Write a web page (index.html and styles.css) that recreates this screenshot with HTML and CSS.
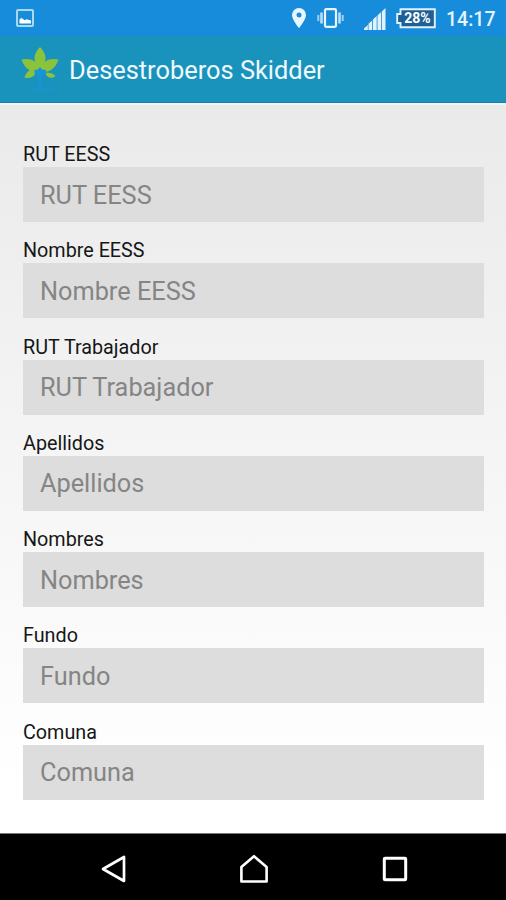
FILE: index.html
```html
<!DOCTYPE html>
<html lang="es">
<head>
<meta charset="utf-8">
<title>Desestroberos Skidder</title>
<link rel="stylesheet" href="styles.css">
</head>
<body>
<div class="screen">
  <div class="status">
    <svg class="picture" width="18" height="18" viewBox="0 0 18 18"><rect x="1" y="1" width="16" height="16" rx="1" fill="none" stroke="#a9d8f7" stroke-width="2"/><path d="M3.500 14.500V10.500l2-1.700 3 2.400 2-1 4.500 1.300v3z" fill="#fff"/></svg>
    <svg class="pin" width="14" height="20" viewBox="0 0 14 20"><path fill="#e9f6ff" fill-rule="evenodd" d="M7 0a7 7 0 0 0-7 7c0 4.700 7 13 7 13s7-8.300 7-13a7 7 0 0 0-7-7zm0 4.500a2.500 2.500 0 1 1 0 5 2.500 2.500 0 0 1 0-5z"/></svg>
    <svg class="vibrate" width="27" height="20" viewBox="0 0 27 20"><rect x="8" y="1.200" width="11" height="17.600" rx="1.200" fill="none" stroke="#e9f6ff" stroke-width="2.200"/><path d="M4.500 4.500v11M22.500 4.500v11" stroke="#b9def8" stroke-width="2.600"/><path d="M1.300 7v6M25.700 7v6" stroke="#9fd0f4" stroke-width="2"/></svg>
    <svg class="signal" width="22" height="22" viewBox="0 0 22 22"><path d="M0 22v-1.500L3.800 17v5zM4.500 22v-6.200L8.200 12.400V22zM9 22V11.600l3.700-3.500V22zM13.500 22V7.400l3.700-3.500V22zM18 22V3.200L21.500 0v22z" fill="#e2f2fd"/></svg>
    <div class="battery">
      <svg width="40" height="21" viewBox="0 0 40 21"><path d="M4.500 1.200H38.800V19.300H4.500V15H1.200V6H4.500z" fill="#1d5f96" stroke="#e2f2fd" stroke-width="1.900"/></svg>
      <span class="percent">28%</span>
    </div>
    <span class="clock">14:17</span>
  </div>
  <header class="bar">
    <svg class="logo" width="38" height="45" viewBox="0 0 38 45">
      <g fill="#8cc33c"><path d="M19 0c3 3 5.500 7 5.500 11.500 0 4-1.500 8-3.500 11.500h-4c-2-3.500-3.500-7.500-3.500-11.500C13.500 7 16 3 19 0z"/><path d="M.5 12.500c6-1.200 11-.5 14 3 2 2.500 2.800 5.500 3 8.500l-4 1C7 24 2.500 19 .5 12.500z"/><path d="M37.500 12.500c-6-1.200-11-.5-14 3-2 2.500-2.800 5.500-3 8.500l4 1c6.500-1 11-6 13-12.500z"/><path d="M16 22.500c-7-1-11 2.500-12.500 8.500 6 .5 11-1 12.500-8.500z"/><path d="M24 26c4-1 8 0 10.500 3-3 3-8 2.500-10.500-3z"/></g>
      <path d="M19 20l2 2.500 4 .5v4l-4.500 3v11.500H34v1.500H11v-1.500h6.300V31l-3.800-4v-4l3.500-.5z" fill="#1793d8"/>
    </svg>
    <h1>Desestroberos Skidder</h1>
  </header>
  <form class="form">
    <label class="field"><span>RUT EESS</span><input type="text" placeholder="RUT EESS"></label>
    <label class="field"><span>Nombre EESS</span><input type="text" placeholder="Nombre EESS"></label>
    <label class="field"><span>RUT Trabajador</span><input type="text" placeholder="RUT Trabajador"></label>
    <label class="field"><span>Apellidos</span><input type="text" placeholder="Apellidos"></label>
    <label class="field"><span>Nombres</span><input type="text" placeholder="Nombres"></label>
    <label class="field"><span>Fundo</span><input type="text" placeholder="Fundo"></label>
    <label class="field"><span>Comuna</span><input type="text" placeholder="Comuna"></label>
  </form>
  <nav class="nav">
    <svg width="28" height="30" viewBox="0 0 28 30"><path d="M24 3v24L3 15z" fill="none" stroke="#fff" stroke-width="2.700" stroke-linejoin="round"/></svg>
    <svg class="home" width="30" height="30" viewBox="0 0 30 30"><path d="M2.400 27.500V13L15 2.200 27.600 13v14.500z" fill="none" stroke="#fff" stroke-width="2.600" stroke-linejoin="round"/></svg>
    <svg width="26" height="26" viewBox="0 0 26 26"><rect x="2.300" y="2.300" width="21.400" height="21.400" rx=".8" fill="none" stroke="#fff" stroke-width="3"/></svg>
  </nav>
</div>
</body>
</html>
```

FILE: styles.css
```css
* { box-sizing: border-box; }
body { margin: 0; font-family: Roboto, sans-serif; }
.screen { width: 506px; height: 900px; display: flex; flex-direction: column; overflow: hidden; }
.screen svg { display: block; flex: none; }

.status { height: 36px; flex: none; display: flex; align-items: flex-start; padding-left: 16px; background: #168cdb; }
.picture { margin-top: 9px; }
.pin { margin: 8px 0 0 258px; }
.vibrate { margin: 8px 0 0 11px; }
.signal { margin: 8px 0 0 20px; }
.battery { position: relative; margin: 8px 0 0 10px; }
.percent { position: absolute; left: 5px; right: 2px; top: 0; line-height: 20px; text-align: center; font-size: 14px; font-weight: 700; color: #fff; }
.clock { margin: 8px 0 0 10px; font-size: 19.500px; line-height: 24px; font-weight: 500; color: #e6f4fe; white-space: nowrap; }

.bar { height: 67px; flex: none; display: flex; align-items: flex-start; padding: 11px 0 0 21px; background: #1a93bc; border-bottom: 1px solid #1583ab; }
.bar h1 { margin: 7px 0 0 10px; font-size: 25.400px; line-height: 33px; font-weight: 400; color: #eef9fd; white-space: nowrap; }

.form { flex: 1; min-height: 0; display: flex; flex-direction: column; gap: 15.300px; padding: 38px 22px 0 23px; border-top: 2px solid #f2f5f6; background: linear-gradient(#eaeaea, #fff 93%); }
.field { display: block; flex: none; height: 81px; }
.field span { display: block; height: 24px; line-height: 24px; font-size: 19.750px; color: #161616; }
.field input { display: block; width: 100%; height: 55px; margin: 0; padding: 1px 17px 0; border: 0; border-radius: 0; background: #ddd; font: 400 25.300px Roboto, sans-serif; color: #333; outline: 0; }
.field input::placeholder { color: #858585; opacity: 1; }

.nav { height: 67px; flex: none; display: flex; align-items: center; justify-content: space-between; padding: 4px 98px 0 100px; background: #000; border-top: 1px solid #777; }
.home { margin-right: 2px; }
```
